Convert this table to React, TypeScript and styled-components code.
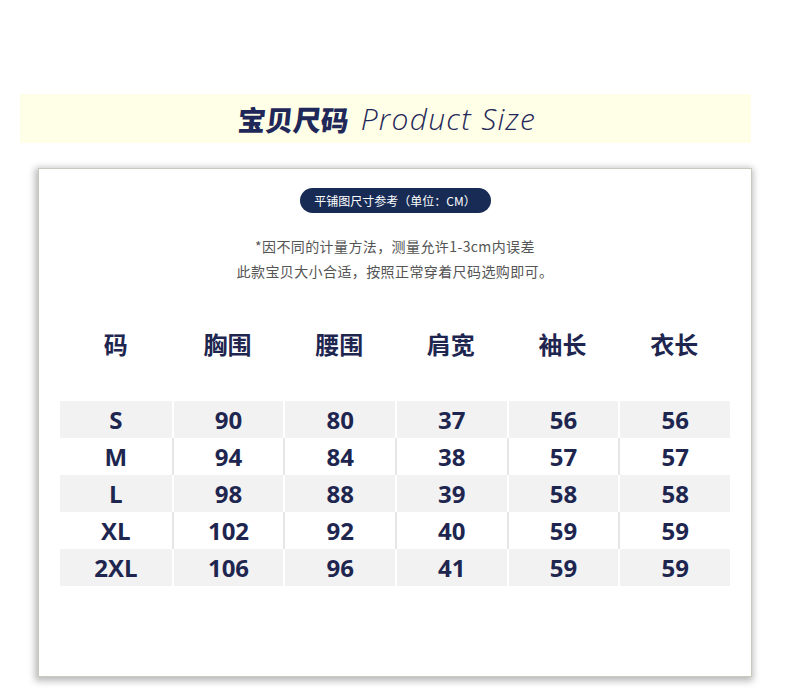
import React from "react";
import styled, { createGlobalStyle } from "styled-components";

const Global = createGlobalStyle`
  html, body { margin: 0; padding: 0; background: #fff; }
  body { font-family: "Open Sans", "Noto Sans CJK SC", sans-serif; }
`;

const Page = styled.div`
  width: 790px;
  height: 692px;
  padding: 94px 0 0 20px;
  box-sizing: border-box;
  overflow: hidden;
`;

const Banner = styled.div`
  width: 731px;
  height: 49px;
  background: #ffffe8;
  display: flex;
  align-items: center;
  justify-content: center;
  gap: 12px;
  color: #1f2858;
  padding-left: 3px;
  box-sizing: border-box;
`;

const BannerCn = styled.span`
  font-family: "Noto Sans CJK SC", sans-serif;
  font-weight: 900;
  font-size: 28px;
  letter-spacing: -0.3px;
  display: inline-block;
  transform: skewX(-6deg);
`;

const BannerEn = styled.span`
  font-family: "Open Sans", sans-serif;
  font-style: italic;
  font-weight: 300;
  font-size: 30px;
  letter-spacing: 1.3px;
`;

const Card = styled.div`
  margin: 25px 0 0 18px;
  width: 714px;
  height: 509px;
  box-sizing: border-box;
  border: 1px solid #c9c9bc;
  background: #fff;
  box-shadow: -1px 2px 7px 2px rgba(0, 0, 0, 0.28);
  display: flex;
  flex-direction: column;
  align-items: center;
  padding: 19px 21px 0;
`;

const Pill = styled.div`
  width: 191px;
  height: 25px;
  border-radius: 13px;
  background: #172b55;
  color: #fff;
  font-family: "Noto Sans CJK SC", sans-serif;
  font-size: 12px;
  display: flex;
  align-items: center;
  justify-content: center;
`;

const Note = styled.div`
  margin-top: 21px;
  font-family: "Noto Sans CJK SC", sans-serif;
  font-size: 14px;
  letter-spacing: 0.4px;
  line-height: 25px;
  color: #555;
  text-align: center;
`;

const Grid = styled.div`
  width: 670px;
  display: grid;
  grid-template-columns: repeat(6, 1fr);
`;

const HeadRow = styled(Grid)`
  margin-top: 34px;
  height: 50px;
  margin-bottom: 33px;
`;

const HeadCell = styled.div`
  display: flex;
  align-items: center;
  justify-content: center;
  font-family: "Noto Sans CJK SC", sans-serif;
  font-weight: 700;
  font-size: 24px;
  color: #1e2650;
`;

const Row = styled(Grid)<{ $shade: boolean }>`
  height: 37px;
  background: ${(p) => (p.$shade ? "#f2f2f2" : "#fff")};
`;

const Cell = styled.div<{ $shade: boolean }>`
  display: flex;
  align-items: center;
  justify-content: center;
  font-family: "Open Sans", sans-serif;
  font-weight: 700;
  font-size: 24px;
  color: #1e2650;
  border-left: 2px solid ${(p) => (p.$shade ? "#ffffff" : "#e6e6e6")};
  &:first-child { border-left: none; }
`;

const heads = ["码", "胸围", "腰围", "肩宽", "袖长", "衣长"];
const rows = [
  ["S", "90", "80", "37", "56", "56"],
  ["M", "94", "84", "38", "57", "57"],
  ["L", "98", "88", "39", "58", "58"],
  ["XL", "102", "92", "40", "59", "59"],
  ["2XL", "106", "96", "41", "59", "59"],
];

export default function App() {
  return (
    <Page>
      <Global />
      <Banner>
        <BannerCn>宝贝尺码</BannerCn>
        <BannerEn>Product Size</BannerEn>
      </Banner>
      <Card>
        <Pill>平铺图尺寸参考（单位：CM）</Pill>
        <Note>
          *因不同的计量方法，测量允许1-3cm内误差
          <br />
          此款宝贝大小合适，按照正常穿着尺码选购即可。
        </Note>
        <HeadRow>
          {heads.map((h) => (
            <HeadCell key={h}>{h}</HeadCell>
          ))}
        </HeadRow>
        {rows.map((r, i) => (
          <Row key={r[0]} $shade={i % 2 === 0}>
            {r.map((c, j) => (
              <Cell key={j} $shade={i % 2 === 0}>
                {c}
              </Cell>
            ))}
          </Row>
        ))}
      </Card>
    </Page>
  );
}
